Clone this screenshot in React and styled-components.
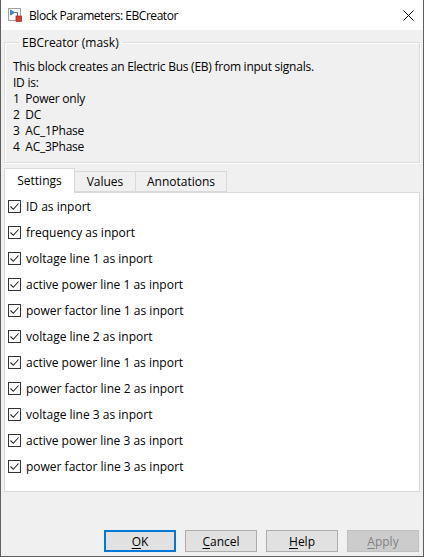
import styled, { createGlobalStyle } from 'styled-components';

const GlobalStyle = createGlobalStyle`
  html, body {
    margin: 0;
    padding: 0;
    background: #f0f0f0;
  }
  body {
    font-family: 'Segoe UI', 'Open Sans', 'Noto Sans', sans-serif;
    font-size: 12px;
    color: #000;
  }
`;

const options = [
  'ID as inport',
  'frequency as inport',
  'voltage line 1 as inport',
  'active power line 1 as inport',
  'power factor line 1 as inport',
  'voltage line 2 as inport',
  'active power line 1 as inport',
  'power factor line 2 as inport',
  'voltage line 3 as inport',
  'active power line 3 as inport',
  'power factor line 3 as inport',
];

const Window = styled.div`
  width: 424px;
  height: 557px;
  box-sizing: border-box;
  border: 1px solid #5f5f5f;
  border-top: none;
  display: flex;
  flex-direction: column;
  background: #f0f0f0;
  overflow: hidden;
`;

const TitleBar = styled.div`
  height: 30px;
  flex: none;
  background: #fff;
  display: flex;
  align-items: center;
  padding: 0 0 0 7px;
`;

const TitleText = styled.span`
  margin-left: 7px;
  font-size: 12px;
  letter-spacing: -0.45px;
  flex: 1;
`;

const CloseBtn = styled.div`
  width: 30px;
  height: 30px;
  display: flex;
  align-items: center;
  justify-content: center;
`;

const Body = styled.div`
  flex: 1;
  display: flex;
  flex-direction: column;
  padding: 4px 3px 0 3px;
`;

const Group = styled.fieldset`
  box-sizing: border-box;
  margin: 0;
  padding: 8px 8px 0 8px;
  border: 1px solid #dcdcdc;
  box-shadow: inset 1px 1px 0 #fff, 1px 1px 0 #fff;
  height: 129px;
  flex: none;
`;

const Legend = styled.legend`
  padding: 0 3px;
  margin-left: 6px;
  font-size: 12px;
`;

const Line = styled.div`
  line-height: 16px;
  white-space: pre;
  letter-spacing: -0.25px;
`;

const Tabs = styled.div`
  display: flex;
  align-items: flex-end;
  margin-top: 5px;
  height: 24px;
  flex: none;
  position: relative;
  z-index: 1;
`;

const Tab = styled.div`
  box-sizing: border-box;
  width: ${(p) => p.$w}px;
  height: ${(p) => (p.$active ? 25 : 21)}px;
  margin-bottom: ${(p) => (p.$active ? -1 : 0)}px;
  border: 1px solid #d9d9d9;
  border-bottom: ${(p) => (p.$active ? 'none' : '1px solid #d9d9d9')};
  border-left: ${(p) => (p.$first || p.$active ? '1px solid #d9d9d9' : 'none')};
  background: ${(p) => (p.$active ? '#fff' : '#f0f0f0')};
  display: flex;
  align-items: center;
  justify-content: center;
  padding-bottom: ${(p) => (p.$active ? 2 : 0)}px;
`;

const Panel = styled.div`
  box-sizing: border-box;
  height: 300px;
  flex: none;
  background: #fff;
  border: 1px solid #d9d9d9;
  padding: 0 0 0 3px;
  display: flex;
  flex-direction: column;
`;

const CheckRow = styled.label`
  display: flex;
  align-items: center;
  height: 26px;
  gap: 5px;
`;

const Box = styled.span`
  box-sizing: border-box;
  width: 13px;
  height: 13px;
  border: 1px solid #333;
  background: #fff;
  display: flex;
  align-items: center;
  justify-content: center;
`;

const Footer = styled.div`
  display: flex;
  justify-content: flex-end;
  gap: 9px;
  padding: 38px 1px 0 0;
`;

const Button = styled.div`
  box-sizing: border-box;
  width: 72px;
  height: 22px;
  display: flex;
  align-items: center;
  justify-content: center;
  background: ${(p) => (p.$disabled ? '#cccccc' : '#e1e1e1')};
  color: ${(p) => (p.$disabled ? '#838383' : '#000')};
  border: ${(p) =>
    p.$default ? '2px solid #0078d7' : p.$disabled ? '1px solid #bfbfbf' : '1px solid #adadad'};
  u {
    text-decoration: underline;
    text-underline-offset: 2px;
  }
`;

const BlockIcon = () => (
  <svg width='14' height='14' viewBox='0 0 14 14'>
    <rect x='0.5' y='0.5' width='12' height='12' fill='#fafafa' stroke='#a0a0a0' />
    <path d='M2.5 2 L2.5 7 L6.5 4.5 Z' fill='#3d8ee0' stroke='#1f5fa6' strokeWidth='0.7' />
    <path d='M6.5 4.5 H9.5 V8' fill='none' stroke='#4a4a4a' strokeWidth='0.8' />
    <rect x='8' y='8' width='5.5' height='5.5' fill='#de3b2f' stroke='#a31f16' strokeWidth='0.7' />
  </svg>
);

const Check = () => (
  <svg width='11' height='11' viewBox='0 0 11 11'>
    <path d='M1.5 5.5 L4.3 8.3 L9.5 2.5' fill='none' stroke='#222' strokeWidth='1.1' />
  </svg>
);

const App = () => {
  return (
    <Window>
      <GlobalStyle />
      <TitleBar>
        <BlockIcon />
        <TitleText>Block Parameters: EBCreator</TitleText>
        <CloseBtn>
          <svg width='11' height='11' viewBox='0 0 11 11'>
            <path d='M0.5 0.5 L10.5 10.5 M10.5 0.5 L0.5 10.5' stroke='#000' strokeWidth='1' />
          </svg>
        </CloseBtn>
      </TitleBar>
      <Body>
        <Group>
          <Legend>EBCreator (mask)</Legend>
          <Line>This block creates an Electric Bus (EB) from input signals.</Line>
          <Line>ID is:</Line>
          <Line>1  Power only</Line>
          <Line>2  DC</Line>
          <Line>3  AC_1Phase</Line>
          <Line>4  AC_3Phase</Line>
        </Group>
        <Tabs>
          <Tab $w={71} $active $first>Settings</Tab>
          <Tab $w={61}>Values</Tab>
          <Tab $w={91}>Annotations</Tab>
        </Tabs>
        <Panel>
          {options.map((option, i) => (
            <CheckRow key={i}>
              <Box>
                <Check />
              </Box>
              {option}
            </CheckRow>
          ))}
        </Panel>
        <Footer>
          <Button $default>
            <span><u>O</u>K</span>
          </Button>
          <Button>
            <span><u>C</u>ancel</span>
          </Button>
          <Button>
            <span><u>H</u>elp</span>
          </Button>
          <Button $disabled>
            <span><u>A</u>pply</span>
          </Button>
        </Footer>
      </Body>
    </Window>
  );
};

export default App;
